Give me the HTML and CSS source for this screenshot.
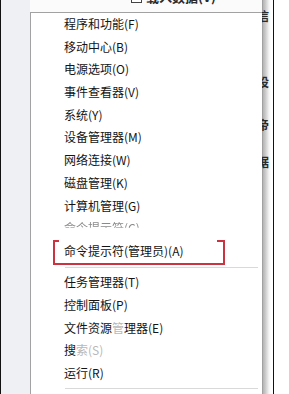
FILE: index.html
```html
<!DOCTYPE html>
<html lang="zh-CN">
<head>
<meta charset="utf-8">
<title>Win+X 菜单</title>
<link rel="stylesheet" href="styles.css">
</head>
<body>
<div class="frame">
  <div class="side-left"></div>
  <div class="center">
    <div class="topstrip"><div class="toptext"><span class="cb"></span>载入数据(V)</div></div>
    <div class="menu">
      <div class="item">程序和功能(F)</div>
      <div class="item">移动中心(B)</div>
      <div class="item">电源选项(O)</div>
      <div class="item">事件查看器(V)</div>
      <div class="item">系统(Y)</div>
      <div class="item">设备管理器(M)</div>
      <div class="item">网络连接(W)</div>
      <div class="item">磁盘管理(K)</div>
      <div class="item">计算机管理(G)</div>
      <div class="item faded"><span class="cut">命令提示符(C)</span></div>
      <div class="item boxed">命令提示符(管理员)(A)<span class="redbox"></span></div>
      <div class="sep sep-a"></div>
      <div class="item">任务管理器(T)</div>
      <div class="item">控制面板(P)</div>
      <div class="item">文件资源<span class="light">管</span>理器(E)</div>
      <div class="item">搜<span class="light">索(S)</span></div>
      <div class="item">运行(R)</div>
      <div class="sep sep-b"></div>
    </div>
  </div>
  <div class="side-right">
    <span class="bgch c1">信</span>
    <span class="bgch c2">设</span>
    <span class="bgch c3">帝</span>
    <span class="bgch c4">据</span>
  </div>
</div>
</body>
</html>
```
FILE: styles.css
```css
html, body {
  margin: 0;
  padding: 0;
  background: #ffffff;
}
body {
  width: 289px;
  height: 394px;
  overflow: hidden;
  font-family: "Noto Sans CJK SC", "Microsoft YaHei", sans-serif;
}
.frame {
  display: flex;
  width: 272px;
  height: 394px;
  border-left: 1px solid #111;
  border-right: 1px solid #111;
  background: #ffffff;
}
.side-left {
  width: 29px;
  flex: none;
  background: #eef0f4;
}
.center {
  width: 232px;
  flex: none;
  display: flex;
  flex-direction: column;
}
.topstrip {
  height: 12px;
  overflow: hidden;
  background: #fbfbfc;
}
.toptext {
  margin-top: -10px;
  margin-left: 101px;
  display: flex;
  align-items: center;
  gap: 4px;
  font-size: 13px;
  line-height: 14px;
  font-weight: 700;
  color: #2a2a2a;
}
.cb {
  width: 11px;
  height: 11px;
  border: 1px solid #444;
  background: #fff;
  box-sizing: border-box;
}
.menu {
  flex: 1;
  background: #ffffff;
  border-left: 1px solid #a2a2a2;
  border-top: 1px solid #a2a2a2;
}
.item {
  position: relative;
  height: 22.7px;
  line-height: 22.7px;
  padding-left: 33px;
  font-size: 12px;
  color: #141414;
  white-space: nowrap;
}
.faded .cut {
  color: #8a8a8a;
  -webkit-mask-image: linear-gradient(to bottom, #000 0, #000 48%, transparent 56%);
  mask-image: linear-gradient(to bottom, #000 0, #000 48%, transparent 56%);
}
.light {
  color: #b8b8b8;
}
.redbox {
  position: absolute;
  left: 22px;
  top: 0;
  width: 172px;
  height: 25px;
  box-sizing: border-box;
  border: 2px solid #cc3340;
  border-top-color: transparent;
}
.redbox::before,
.redbox::after {
  content: "";
  position: absolute;
  top: -2px;
  height: 2px;
  background: #cc3340;
}
.redbox::before {
  left: -2px;
  width: 6px;
}
.redbox::after {
  right: -2px;
  width: 8px;
}
.sep {
  height: 1px;
  background: #d9d9d9;
  margin-left: 34px;
  margin-right: 4px;
}
.sep-a {
  margin-top: 4px;
  margin-bottom: 3.6px;
}
.sep-b {
  margin-top: 3px;
}
.side-right {
  width: 11px;
  flex: none;
  display: flex;
  flex-direction: column;
  overflow: hidden;
  background:
    linear-gradient(to right, #8e8e8e 0, #b4b4b4 1px, #c6c6c6 3px, #dcdcdc 5px, #f4f4f4 7px, #ffffff 9px);
}
.bgch {
  display: block;
  margin-left: -5px;
  font-size: 12px;
  line-height: 13px;
  height: 13px;
  font-weight: 700;
  color: #2a2a2a;
}
.c1 { margin-top: 9px; }
.c2 { margin-top: 53px; }
.c3 { margin-top: 30px; }
.c4 { margin-top: 24px; }
```
